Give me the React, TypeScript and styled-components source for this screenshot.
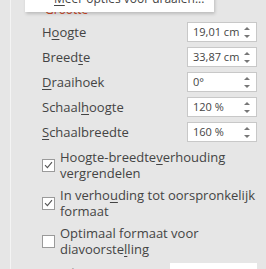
import styled, { createGlobalStyle } from 'styled-components'

const GlobalStyle = createGlobalStyle`
  html, body {
    margin: 0;
    padding: 0;
    background: #e6e6e6;
    overflow: hidden;
  }
  * {
    box-sizing: border-box;
  }
`

const Pane = styled.div`
  position: relative;
  width: 266px;
  height: 269px;
  overflow: hidden;
  background: #e6e6e6;
  font-family: "Open Sans", "Noto Sans", sans-serif;
  font-size: 13px;
  color: #444;
`

const Content = styled.div`
  margin-left: 10px;
  height: 100%;
  border-left: 1px solid #f4f4f4;
  padding: 0 9px 0 31px;
  display: flex;
  flex-direction: column;
`

const Menu = styled.div`
  position: absolute;
  top: -9px;
  left: 25px;
  width: 189px;
  height: 21px;
  background: #fff;
  box-shadow: 1px 2px 3px rgba(0, 0, 0, 0.18);
  padding-left: 29px;
  font-size: 12px;
  line-height: 16px;
  white-space: nowrap;
  overflow: hidden;
  color: #444;
`

const SectionTitle = styled.div`
  color: #d24726;
  font-size: 12px;
  line-height: 16px;
  padding-left: 3px;
  margin-top: 2px;
  margin-bottom: 4px;
`

const Fields = styled.div`
  display: flex;
  flex-direction: column;
  gap: 5px;
`

const Row = styled.div`
  display: flex;
  align-items: center;
  justify-content: space-between;
  height: 20px;
`

const Label = styled.span<{ disabled?: boolean }>`
  color: ${p => (p.disabled ? '#9a9a9a' : '#444')};
`

const Key = styled.span`
  text-decoration: underline;
  text-underline-offset: 2px;
`

const Spin = styled.div<{ wide?: boolean }>`
  position: relative;
  width: ${p => (p.wide ? '87px' : '70px')};
  height: 20px;
  background: #fff;
  border: 1px solid ${p => (p.wide ? '#fff' : '#c8c8c8')};
  padding-left: 5px;
  font-size: 11px;
  line-height: 18px;
  white-space: nowrap;
  color: ${p => (p.wide ? '#9a9a9a' : '#444')};
`

const Arrows = styled.div`
  position: absolute;
  right: 6px;
  top: 4px;
  display: flex;
  flex-direction: column;
  gap: 5px;
`

const Arrow = styled.span<{ down?: boolean }>`
  width: 0;
  height: 0;
  border-left: 3px solid transparent;
  border-right: 3px solid transparent;
  ${p =>
    p.down
      ? 'border-top: 3px solid #777;'
      : 'border-bottom: 3px solid #777;'}
`

const Options = styled.div`
  display: flex;
  flex-direction: column;
  gap: 6px;
  margin-top: 7px;
`

const Option = styled.div`
  display: flex;
  align-items: center;
  gap: 5px;
`

const Box = styled.span`
  flex: none;
  width: 13px;
  height: 13px;
  background: #fff;
  border: 1px solid #9a9a9a;
  display: flex;
  align-items: center;
  justify-content: center;
`

const OptionText = styled.span`
  flex: 1;
  line-height: 16px;
`

const Footer = styled(Row)`
  margin-top: 6px;
`

function Check() {
  return (
    <svg width="9" height="8" viewBox="0 0 9 8">
      <path d="M1 4.2 L3.4 6.6 L8 1.2" fill="none" stroke="#555" strokeWidth="1.1" />
    </svg>
  )
}

function SpinBox({ value }: { value: string }) {
  return (
    <Spin>
      {value}
      <Arrows>
        <Arrow />
        <Arrow down />
      </Arrows>
    </Spin>
  )
}

export default function App() {
  return (
    <Pane>
      <GlobalStyle />
      <Content>
        <SectionTitle>Grootte</SectionTitle>
        <Fields>
          <Row>
            <Label>H<Key>o</Key>ogte</Label>
            <SpinBox value="19,01 cm" />
          </Row>
          <Row>
            <Label>Breed<Key>t</Key>e</Label>
            <SpinBox value="33,87 cm" />
          </Row>
          <Row>
            <Label><Key>D</Key>raaihoek</Label>
            <SpinBox value="0°" />
          </Row>
          <Row>
            <Label>Schaal<Key>h</Key>oogte</Label>
            <SpinBox value="120 %" />
          </Row>
          <Row>
            <Label><Key>S</Key>chaalbreedte</Label>
            <SpinBox value="160 %" />
          </Row>
        </Fields>
        <Options>
          <Option>
            <Box><Check /></Box>
            <OptionText>Hoogte-breedte<Key>v</Key>erhouding vergrendelen</OptionText>
          </Option>
          <Option>
            <Box><Check /></Box>
            <OptionText>In verho<Key>u</Key>ding tot oorspronkelijk formaat</OptionText>
          </Option>
          <Option>
            <Box />
            <OptionText>Optimaal formaat voor diavoorste<Key>l</Key>ling</OptionText>
          </Option>
        </Options>
        <Footer>
          <Label disabled>Resolutie</Label>
          <Spin wide>640 x 480</Spin>
        </Footer>
      </Content>
      <Menu>
        <Key>M</Key>eer opties voor draaien...
      </Menu>
    </Pane>
  )
}
